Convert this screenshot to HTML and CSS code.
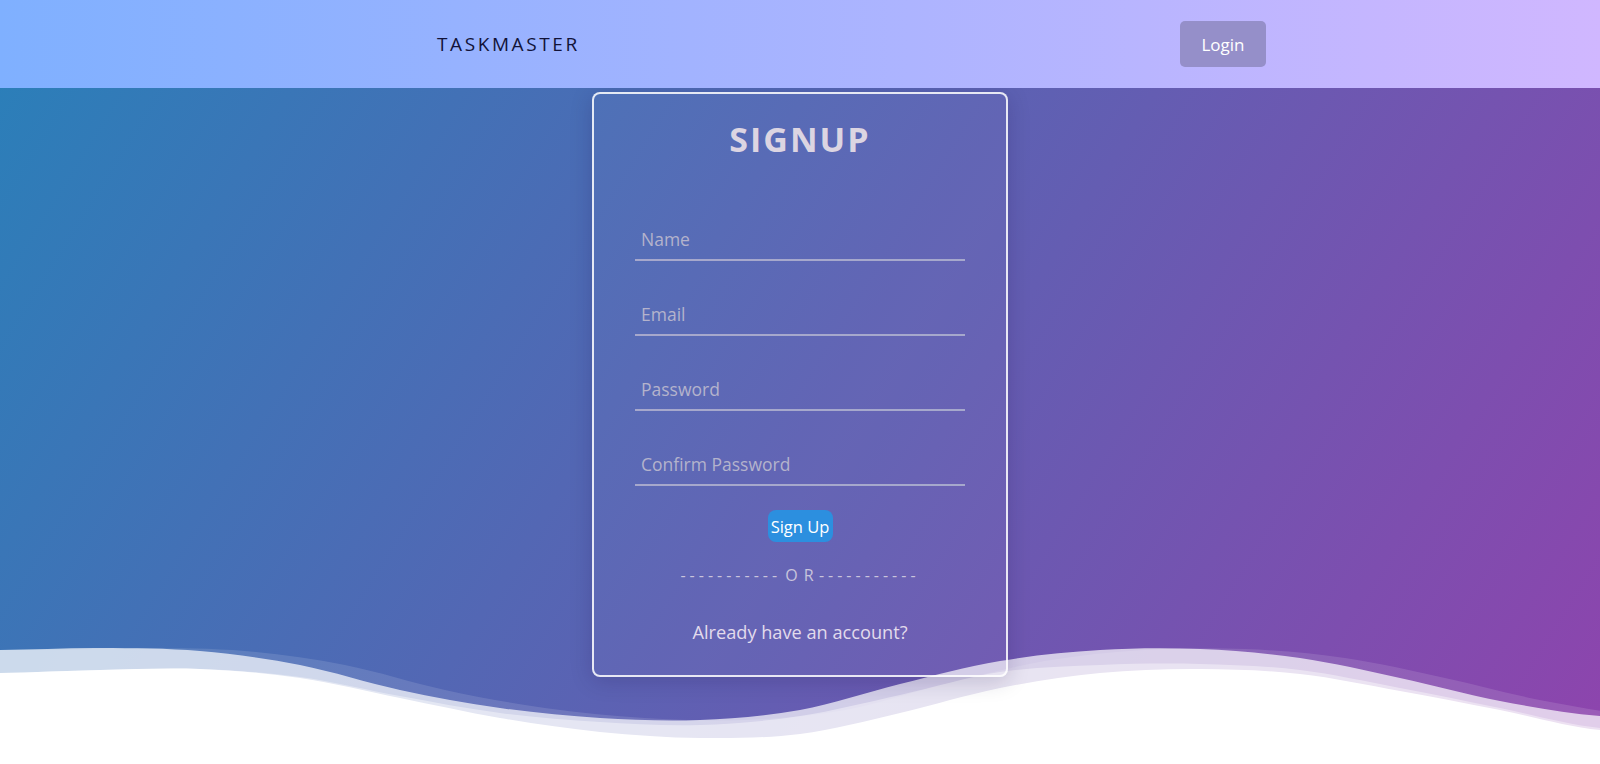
FILE: index.html
```html
<!DOCTYPE html>
<html lang="en">
<head>
<meta charset="utf-8">
<title>TaskMaster - Signup</title>
<link rel="stylesheet" href="styles.css">
</head>
<body>
<div class="page">
  <header class="topbar">
    <div class="brand">TASKMASTER</div>
    <button class="login-btn" type="button">Login</button>
  </header>
  <main class="main">
    <form class="card">
      <h1 class="title">SIGNUP</h1>
      <div class="fields">
        <input class="field" type="text" placeholder="Name">
        <input class="field" type="email" placeholder="Email">
        <input class="field" type="password" placeholder="Password">
        <input class="field" type="password" placeholder="Confirm Password">
      </div>
      <button class="signup-btn" type="button">Sign Up</button>
      <div class="or"><span class="dash">-----------</span> <span class="or-text">O R</span> <span class="dash">-----------</span></div>
      <p class="already">Already have an account?</p>
    </form>
  </main>
  <svg class="wave" viewBox="0 640 1600 124" width="1600" height="124" preserveAspectRatio="none" aria-hidden="true">
    <path class="wave-a" transform="translate(45,0)" d="M-100,650 L0,650 C33,649.7 67,647.8 100,648 C133,648.2 167,648.2 200,651 C233,653.8 267,658.5 300,665 C333,671.5 367,682.8 400,690 C433,697.2 467,703.3 500,708 C533,712.7 567,716 600,718 C633,720 667,721.3 700,720 C733,718.7 767,716 800,710 C833,704 867,692.2 900,684 C933,675.8 967,666.7 1000,661 C1033,655.3 1067,652 1100,650 C1133,648 1167,647.7 1200,649 C1233,650.3 1267,653.2 1300,658 C1333,662.8 1367,670.8 1400,678 C1433,685.2 1467,694.7 1500,701 C1533,707.3 1567,713.5 1600,716 L1700,730 L1700,764 L-100,764 Z"/>
    <path class="wave-b" d="M0,650 C33,649.7 67,647.8 100,648 C133,648.2 167,648.2 200,651 C233,653.8 267,658.5 300,665 C333,671.5 367,682.8 400,690 C433,697.2 467,703.3 500,708 C533,712.7 567,716 600,718 C633,720 667,721.3 700,720 C733,718.7 767,716 800,710 C833,704 867,692.2 900,684 C933,675.8 967,666.7 1000,661 C1033,655.3 1067,652 1100,650 C1133,648 1167,647.7 1200,649 C1233,650.3 1267,653.2 1300,658 C1333,662.8 1367,670.8 1400,678 C1433,685.2 1467,694.7 1500,701 C1533,707.3 1567,713.5 1600,716 L1600,764 L0,764 Z"/>
    <path class="wave-c" d="M0,673 C33,672.5 67,670.7 100,670 C133,669.3 167,667.8 200,669 C233,670.2 267,672.5 300,677 C333,681.5 367,690 400,696 C433,702 467,708.7 500,713 C533,717.3 567,720 600,722 C633,724 667,726 700,725 C733,724 767,721 800,716 C833,711 867,702.3 900,695 C933,687.7 967,677 1000,672 C1033,667 1067,666.3 1100,665 C1133,663.7 1167,663.2 1200,664 C1233,664.8 1267,666 1300,670 C1333,674 1367,681.7 1400,688 C1433,694.3 1467,701.3 1500,708 C1533,714.7 1567,724.7 1600,728 L1600,764 L0,764 Z"/>
    <path class="wave-d" d="M0,673 C33,672.5 67,670.7 100,670 C133,669.3 167,667.7 200,669 C233,670.3 267,673.2 300,678 C333,682.8 367,691.3 400,698 C433,704.7 467,712.3 500,718 C533,723.7 567,728.7 600,732 C633,735.3 667,737.7 700,738 C733,738.3 767,738.2 800,734 C833,729.8 867,720.7 900,713 C933,705.3 967,694.7 1000,688 C1033,681.3 1067,676.2 1100,673 C1133,669.8 1167,668.8 1200,669 C1233,669.2 1267,670.3 1300,674 C1333,677.7 1367,685 1400,691 C1433,697 1467,703.5 1500,710 C1533,716.5 1567,726.7 1600,730 L1600,764 L0,764 Z"/>
  </svg>
</div>
</body>
</html>
```

FILE: styles.css
```css
html, body {
  margin: 0;
  padding: 0;
}

body {
  font-family: "Poppins", "Open Sans", "Noto Sans", sans-serif;
}

.page {
  position: relative;
  height: 100vh;
  min-height: 764px;
  overflow: hidden;
  background: linear-gradient(122deg, #2980b9, #8e44ad);
}

.topbar {
  position: relative;
  z-index: 2;
  height: 88px;
  box-sizing: border-box;
  padding: 0 334px 0 437px;
  display: flex;
  align-items: center;
  justify-content: space-between;
  background: linear-gradient(90deg, #7fb0ff, #d0b7ff);
}

.brand {
  font-family: "Open Sans", sans-serif;
  font-size: 19px;
  letter-spacing: 2.6px;
  color: #121338;
}

.login-btn {
  width: 86px;
  height: 46px;
  border: none;
  border-radius: 5px;
  background: #958fc9;
  color: #ffffff;
  font-family: "Open Sans", sans-serif;
  font-size: 17px;
  padding: 0;
}

.main {
  position: relative;
  z-index: 1;
  display: flex;
  justify-content: center;
  padding-top: 4px;
}

.card {
  width: 416px;
  height: 585px;
  box-sizing: border-box;
  margin: 0;
  border: 2px solid rgba(255, 255, 255, 0.85);
  border-radius: 8px;
  background: rgba(255, 255, 255, 0.03);
  box-shadow: 0 4px 22px rgba(20, 10, 60, 0.18);
  display: flex;
  flex-direction: column;
  align-items: center;
}

.title {
  margin: 24px 0 0;
  font-family: "Open Sans", sans-serif;
  font-weight: 700;
  font-size: 34px;
  line-height: 42px;
  letter-spacing: 2px;
  color: #dcd5e2;
}

.fields {
  margin-top: 59px;
  display: flex;
  flex-direction: column;
  gap: 33px;
}

.field {
  width: 330px;
  height: 42px;
  box-sizing: border-box;
  border: none;
  border-bottom: 2px solid #a6a8cc;
  background: transparent;
  padding: 0 0 0 6px;
  font-family: "Open Sans", sans-serif;
  font-size: 17.5px;
  color: #e6e2ee;
  outline: none;
}

.field::placeholder {
  color: #b4b3cc;
}

.signup-btn {
  margin-top: 24px;
  height: 32px;
  width: 65px;
  padding: 0;
  border: none;
  border-radius: 8px;
  background: #2c8fdf;
  color: #ffffff;
  font-family: "Open Sans", sans-serif;
  font-size: 16.5px;
}

.or {
  margin-top: 23px;
  font-family: "Open Sans", sans-serif;
  font-size: 16px;
  line-height: 20px;
  color: #c9c4dc;
  white-space: pre;
}

.dash {
  letter-spacing: 4px;
}

.or-text {
  letter-spacing: 1px;
}

.already {
  margin: 36px 0 0;
  font-family: "Open Sans", sans-serif;
  font-size: 18.2px;
  line-height: 22px;
  color: #e2dbec;
}

.wave {
  position: absolute;
  left: 0;
  bottom: 0;
  z-index: 0;
  display: block;
}

.wave-a {
  fill: rgba(255, 255, 255, 0.12);
}

.wave-b {
  fill: rgba(255, 255, 255, 0.7);
}

.wave-c {
  fill: rgba(255, 255, 255, 0.4);
}

.wave-d {
  fill: #ffffff;
}
```
